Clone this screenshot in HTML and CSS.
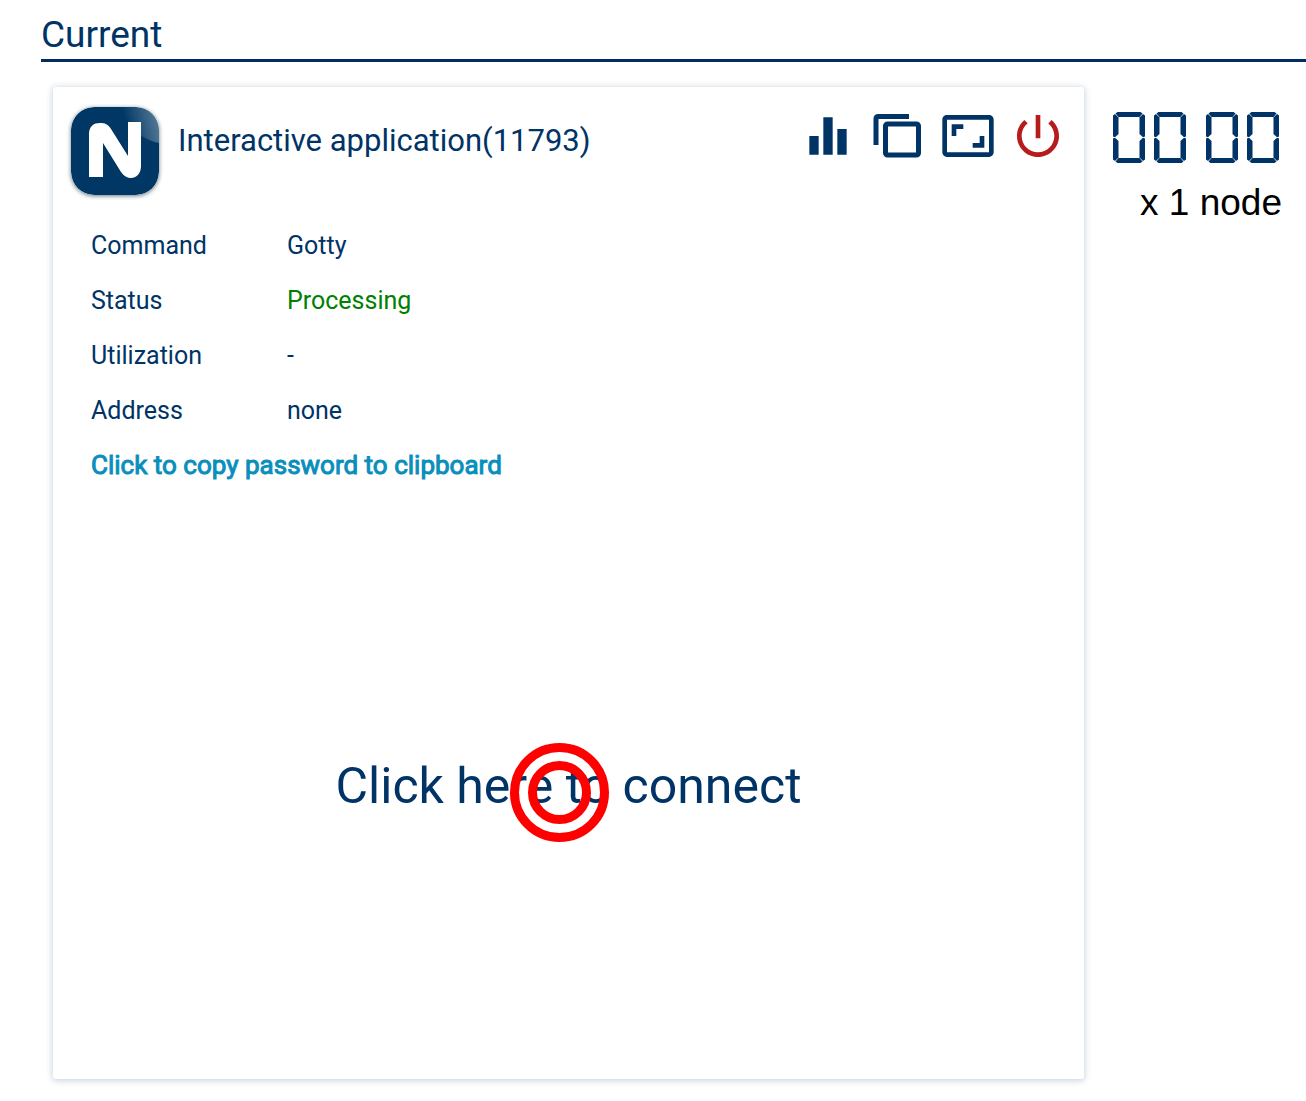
FILE: index.html
```html
<!DOCTYPE html>
<html lang="en">
<head>
<meta charset="utf-8">
<meta name="viewport" content="width=device-width, initial-scale=1">
<title>Current</title>
<link rel="stylesheet" href="styles.css">
</head>
<body>
<main class="page">
  <h1 class="page-title">Current</h1>
  <div class="job">
    <section class="card">
      <header class="card-header">
        <svg class="logo" viewBox="0 0 88 88" aria-hidden="true">
          <defs>
            <linearGradient id="shine" x1="1" y1="0.2" x2="0.1" y2="0.4">
              <stop offset="0" stop-color="#fff" stop-opacity=".35"/>
              <stop offset="1" stop-color="#fff" stop-opacity="0"/>
            </linearGradient>
            <clipPath id="tile"><rect width="88" height="88" rx="23"/></clipPath>
          </defs>
          <rect width="88" height="88" rx="23" fill="#003764"/>
          <path clip-path="url(#tile)" d="M50 0H88V36C70 32 55 20 50 0Z" fill="url(#shine)"/>
          <path d="M18 70V27C18 19 23 16 29 16C34 16 37 17 40 22L57 49V15H70V59C70 67 65 71 60 71C56 71 53 69 50 65L32 36V70Z" fill="#fff"/>
        </svg>
        <h2 class="card-title">Interactive application(11793)</h2>
        <div class="actions">
          <button type="button" class="action" aria-label="Statistics">
            <svg viewBox="0 0 24 24"><path d="M10 20h4V4h-4v16zm-6 0h4v-8H4v8zM16 9v11h4V9h-4z"/></svg>
          </button>
          <button type="button" class="action" aria-label="Clone">
            <svg viewBox="0 0 56 56"><g fill="none" stroke="currentColor" stroke-width="5"><path d="M6 37V11Q6 8.500 8.500 8.500H39"/><rect x="15.500" y="16" width="33" height="31" rx="2"/></g></svg>
          </button>
          <button type="button" class="action" aria-label="Window size">
            <svg viewBox="0 0 24 24"><path d="M19 12h-2v3h-3v2h5v-5zM7 9h3V7H5v5h2V9zm14-6H3c-1.100 0-2 .9-2 2v14c0 1.100.9 2 2 2h18c1.100 0 2-.9 2-2V5c0-1.100-.9-2-2-2zm0 16.010H3V4.990h18v14.020z"/></svg>
          </button>
          <button type="button" class="action action-danger" aria-label="Shut down">
            <svg viewBox="0 0 24 24"><path d="M13 3h-2v10h2V3zm4.830 2.170l-1.420 1.420C17.990 7.860 19 9.810 19 12c0 3.870-3.130 7-7 7s-7-3.130-7-7c0-2.190 1.010-4.140 2.580-5.420L6.170 5.170C4.230 6.820 3 9.260 3 12c0 4.970 4.030 9 9 9s9-4.030 9-9c0-2.740-1.230-5.180-3.170-6.830z"/></svg>
          </button>
        </div>
      </header>
      <table class="details">
        <tr><th scope="row">Command</th><td>Gotty</td></tr>
        <tr><th scope="row">Status</th><td class="status-ok">Processing</td></tr>
        <tr><th scope="row">Utilization</th><td>-</td></tr>
        <tr><th scope="row">Address</th><td>none</td></tr>
      </table>
      <button type="button" class="copy-password">Click to copy password to clipboard</button>
      <button type="button" class="connect">
        <span class="connect-label">Click here to connect<span class="target"></span></span>
      </button>
    </section>
    <aside class="usage">
      <svg class="clock" viewBox="0 0 166 51" role="img" aria-label="00 00">
        <defs>
          <g id="zero">
            <path d="M2.500 1.500L4.500 0H27.500L29.500 1.500L26.500 5H5.500Z"/>
            <path d="M2.500 49.500L4.500 51H27.500L29.500 49.500L26.500 46H5.500Z"/>
            <path d="M0 3.500L2 2L5.500 5.500V22L2 25.200L0 24.500Z"/>
            <path d="M0 47.500L2 49L5.500 45.500V29L2 25.800L0 26.500Z"/>
            <path d="M32 3.500L30 2L26.500 5.500V22L30 25.200L32 24.500Z"/>
            <path d="M32 47.500L30 49L26.500 45.500V29L30 25.800L32 26.500Z"/>
          </g>
        </defs>
        <use href="#zero"/><use href="#zero" x="41"/><use href="#zero" x="93"/><use href="#zero" x="134"/>
      </svg>
      <p class="nodes">x 1 node</p>
    </aside>
  </div>
</main>
</body>
</html>
```
FILE: styles.css
```css
* { box-sizing: border-box; }

body {
  margin: 0;
  background: #fff;
  color: #003366;
  font-family: Roboto, "Liberation Sans", sans-serif;
}

button {
  margin: 0;
  padding: 0;
  border: 0;
  background: none;
  color: inherit;
  font: inherit;
  cursor: pointer;
}

.page {
  display: flex;
  flex-direction: column;
  min-height: 100vh;
  padding: 11px 0 22px 41px;
}

.page-title {
  margin: 0;
  border-bottom: 3px solid #002d62;
  font-size: 37px;
  font-weight: 400;
  line-height: 48px;
}

.job {
  flex: 1;
  display: flex;
  padding: 25px 0 0 12px;
}

.card {
  flex: 1;
  display: flex;
  flex-direction: column;
  border-radius: 3px;
  background: #fff;
  box-shadow: 0 1px 6px 1px rgba(0, 51, 102, .2);
}

.card-header {
  display: flex;
  align-items: flex-start;
  padding: 20px 18px 0 18px;
}

.logo {
  width: 88px;
  height: 88px;
  border-radius: 23px;
  box-shadow: 0 1px 4px rgba(0, 30, 40, .6);
}

.card-title {
  flex: 1;
  margin: 0;
  padding-left: 19px;
  font-size: 31px;
  font-weight: 400;
  line-height: 68px;
}

.actions {
  display: flex;
  gap: 14px;
  padding-top: 1px;
}

.action {
  width: 56px;
  height: 56px;
}

.action svg {
  display: block;
  fill: currentColor;
}

.action-danger { color: #b71c1c; }

.details {
  margin: 23px 38px 0;
  border-collapse: collapse;
  font-size: 25px;
  line-height: 55px;
  text-align: left;
}

.details th {
  width: 196px;
  padding: 0;
  font-weight: 400;
}

.details td { padding: 0; }

.details .status-ok { color: #008000; }

.copy-password {
  align-self: flex-start;
  margin-left: 38px;
  color: #0a8fbc;
  font-size: 26px;
  -webkit-text-stroke: 1px #0a8fbc;
  line-height: 54px;
}

.connect {
  flex: 1;
  font-size: 50px;
  line-height: 64px;
}

.connect-label { position: relative; }

/* Double ring marking the click spot */
.target {
  position: absolute;
  top: -14px;
  left: 174px;
  width: 99px;
  height: 99px;
  border: 9px solid #f00;
  border-radius: 50%;
}

.target::after {
  content: "";
  position: absolute;
  inset: 9px;
  border: 9px solid #f00;
  border-radius: 50%;
}

.usage {
  display: flex;
  flex-direction: column;
  align-items: flex-end;
  width: 222px;
  padding: 25px 24px 0 0;
}

.clock {
  width: 166px;
  height: 51px;
  margin-right: 3px;
  fill: #003366;
}

.nodes {
  margin: 16px 0 0;
  color: #000;
  font-family: "Liberation Sans", sans-serif;
  font-size: 37px;
  line-height: 48px;
}
```
